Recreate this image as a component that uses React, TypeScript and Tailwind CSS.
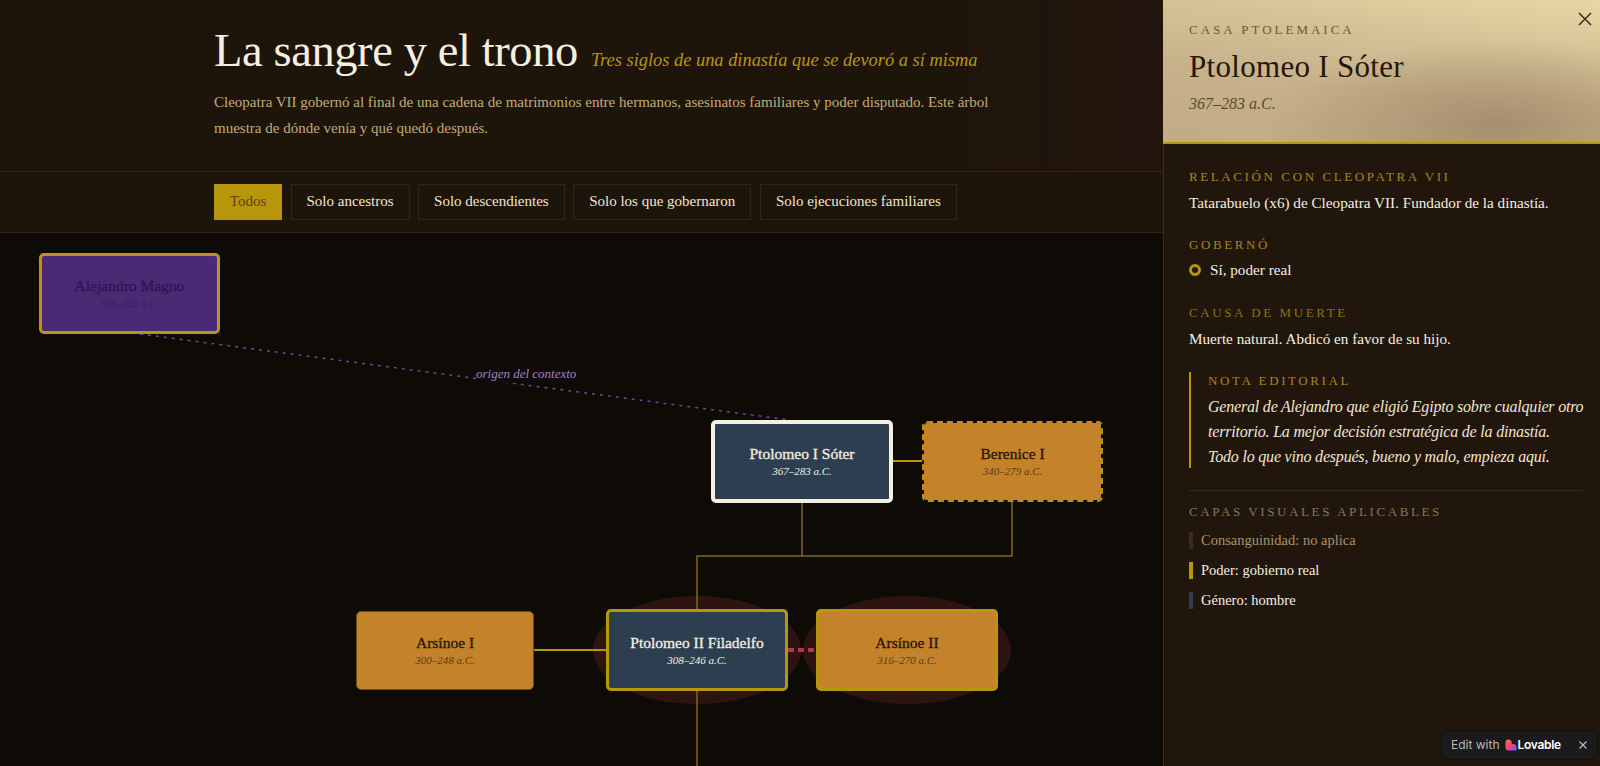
const filters = ['Solo ancestros', 'Solo descendientes', 'Solo los que gobernaron', 'Solo ejecuciones familiares'];

const nodes = [
  {
    name: 'Alejandro Magno',
    dates: '356–323 a.C.',
    box: 'left-[39px] top-[20px] w-[181px] h-[81px] bg-[#4b2a75] border-[3px] border-[#b8941f] text-[#2a1650]',
    sub: 'text-[#35205c]',
  },
  {
    name: 'Ptolomeo I Sóter',
    dates: '367–283 a.C.',
    box: 'left-[711px] top-[187px] w-[182px] h-[83px] bg-[#2c3e50] border-4 border-[#f5efe0] text-[#f5efe0]',
    sub: 'text-[#f5efe0]',
  },
  {
    name: 'Berenice I',
    dates: '340–279 a.C.',
    box: 'left-[922px] top-[188px] w-[181px] h-[81px] bg-[#c4832a] bg-clip-padding border-2 border-dashed border-[#b8960c] text-[#241608]',
    sub: 'text-[#5a3c14]',
  },
  {
    name: 'Arsínoe I',
    dates: '300–248 a.C.',
    box: 'left-[356px] top-[378px] w-[178px] h-[79px] bg-[#c4832a] border border-[#6e4c18] text-[#241608]',
    sub: 'text-[#5a3c14]',
  },
  {
    name: 'Ptolomeo II Filadelfo',
    dates: '308–246 a.C.',
    box: 'left-[606px] top-[376px] w-[182px] h-[82px] bg-[#2c3e50] border-[3px] border-[#b8960c] text-[#f5efe0]',
    sub: 'text-[#f5efe0]',
  },
  {
    name: 'Arsínoe II',
    dates: '316–270 a.C.',
    box: 'left-[816px] top-[376px] w-[182px] h-[82px] bg-[#c4832a] border-[3px] border-[#b8960c] text-[#241608]',
    sub: 'text-[#5a3c14]',
  },
];

const layers = [
  { label: 'Consanguinidad: no aplica', bar: 'bg-[#3a2c18]', text: 'text-[#a89468]' },
  { label: 'Poder: gobierno real', bar: 'bg-[#b8960c]', text: 'text-[#f5efe0]' },
  { label: 'Género: hombre', bar: 'bg-[#2c3e50]', text: 'text-[#f5efe0]' },
];

function Edges() {
  return (
    <svg className="absolute inset-0" width="1163" height="533" fill="none">
      <ellipse cx="697" cy="417" rx="104" ry="54" fill="#2e1410" />
      <ellipse cx="907" cy="417" rx="104" ry="54" fill="#2e1410" />
      <line x1="140" y1="101" x2="790" y2="187" stroke="#6b4a94" strokeWidth="1.5" strokeDasharray="3 5" />
      <line x1="893" y1="228" x2="922" y2="228" stroke="#b8960c" strokeWidth="2" />
      <line x1="534" y1="417" x2="606" y2="417" stroke="#b8960c" strokeWidth="2" />
      <line x1="788" y1="417" x2="816" y2="417" stroke="#b03a4a" strokeWidth="4" strokeDasharray="6 4" />
      <path d="M802 270V323M1012 269V323M696.5 323H1012.5M697 323V376M697 458V533" stroke="#84661f" strokeWidth="1.5" />
    </svg>
  );
}

function TreeNode({ name, dates, box, sub }: (typeof nodes)[number]) {
  return (
    <div className={`absolute flex flex-col items-center justify-center rounded-[5px] ${box}`}>
      <span className="text-[15.5px] leading-[20px] font-normal [-webkit-text-stroke:0.3px_currentColor]">{name}</span>
      <span className={`text-[11px] leading-[15px] italic ${sub}`}>{dates}</span>
    </div>
  );
}

export default function App() {
  return (
    <div className="flex h-[766px] w-[1600px] overflow-hidden bg-[#0e0a06] font-['Liberation_Serif',serif]">
      <main className="flex w-[1163px] shrink-0 flex-col">
        <header className="h-[172px] border-b border-[#33260f] bg-gradient-to-r from-[#1e150a] from-80% to-[#21140c] pl-[214px] pt-[19px]">
          <div className="flex items-baseline">
            <h1 className="text-[46.5px] leading-[64px] font-normal tracking-[-0.4px] text-[#f5efe0]">La sangre y el trono</h1>
            <span className="ml-[13px] text-[18.4px] italic text-[#b8960c]">Tres siglos de una dinastía que se devoró a sí misma</span>
          </div>
          <p className="mt-[6px] w-[790px] text-[15px] leading-[26px] text-[#c4ab76]">
            Cleopatra VII gobernó al final de una cadena de matrimonios entre hermanos, asesinatos familiares y poder disputado. Este árbol muestra de dónde venía y qué quedó después.
          </p>
        </header>

        <nav className="flex h-[61px] items-center gap-[8.5px] border-b border-[#33260f] bg-[#1e150a] pl-[214px]">
          <button className="h-9 w-[68px] border border-[#b8960c] bg-[#b8960c] pb-px text-[15px] text-[#5a4310]">Todos</button>
          {filters.map((label) => (
            <button key={label} className="h-9 border border-[#33260f] px-[15px] pb-px text-[15px] text-[#f0e6cf]">
              {label}
            </button>
          ))}
        </nav>

        <section className="relative flex-1 overflow-hidden bg-[#0e0a06]">
          <Edges />
          {nodes.map((node) => (
            <TreeNode key={node.name} {...node} />
          ))}
          <span className="absolute left-[476px] top-[132px] bg-[#0e0a06] text-[13px] leading-[18px] italic text-[#a582c4]">origen del contexto</span>
        </section>
      </main>

      <aside className="relative flex w-[437px] shrink-0 flex-col border-l border-[#3a2c15] bg-[#21160b]">
        <div className="-ml-px h-[144px] border-b-2 border-[#b8960c] bg-[radial-gradient(ellipse_230px_85px_at_76%_88%,#a68f6e_0%,rgba(166,143,110,0)_100%),linear-gradient(188deg,#e8d7a4_0%,#d6c497_28%,#c6b18a_62%,#c2ab86_100%)] pl-[26px] pt-[21px]">
          <p className="text-[13px] leading-[18px] tracking-[3px] text-[#6d5a35]">CASA PTOLEMAICA</p>
          <h2 className="mt-[8px] text-[31px] leading-[40px] tracking-[0.3px] text-[#241608]">Ptolomeo I Sóter</h2>
          <p className="mt-[6px] text-[16px] leading-[22px] italic text-[#5a4a30]">367–283 a.C.</p>
        </div>
        <button className="absolute right-[6px] top-[10px] text-[#3a2c15]" aria-label="Cerrar">
          <svg width="18" height="18" viewBox="0 0 18 18" fill="none" stroke="currentColor" strokeWidth="1.5">
            <path d="M3 3l12 12M15 3L3 15" />
          </svg>
        </button>

        <div className="pl-[25px] pr-[17px] pt-[24px]">
          <h3 className="text-[13px] leading-[18px] tracking-[2.6px] text-[#a8861a]">RELACIÓN CON CLEOPATRA VII</h3>
          <p className="mt-[5px] text-[15.2px] leading-[24px] text-[#f5efe0]">Tatarabuelo (x6) de Cleopatra VII. Fundador de la dinastía.</p>

          <h3 className="mt-[21px] text-[13px] leading-[18px] tracking-[2.6px] text-[#a8861a]">GOBERNÓ</h3>
          <div className="mt-[4px] flex items-center gap-[9px]">
            <span className="h-3 w-3 rounded-full border-[3px] border-[#b8960c]" />
            <span className="text-[15.2px] leading-[24px] text-[#f5efe0]">Sí, poder real</span>
          </div>

          <h3 className="mt-[22px] text-[13px] leading-[18px] tracking-[2.6px] text-[#8f7216]">CAUSA DE MUERTE</h3>
          <p className="mt-[5px] text-[15.2px] leading-[24px] text-[#f5efe0]">Muerte natural. Abdicó en favor de su hijo.</p>

          <div className="mt-[21px] h-[96px] border-l-2 border-[#b8960c] pl-[17px]">
            <h3 className="text-[13px] leading-[18px] tracking-[2.6px] text-[#a8861a]">NOTA EDITORIAL</h3>
            <p className="mt-[4px] text-[16px] leading-[25px] tracking-[-0.2px] whitespace-nowrap italic text-[#f0e6cf]">
              General de Alejandro que eligió Egipto sobre cualquier otro
              <br />
              territorio. La mejor decisión estratégica de la dinastía.
              <br />
              Todo lo que vino después, bueno y malo, empieza aquí.
            </p>
          </div>

          <div className="mt-[22px] border-t border-[#3a2c15] pt-[12px]">
            <h3 className="text-[13px] leading-[18px] tracking-[2.6px] text-[#8a7850]">CAPAS VISUALES APLICABLES</h3>
            <ul className="mt-[7px] flex flex-col gap-[5px]">
              {layers.map((layer) => (
                <li key={layer.label} className="flex h-[25px] items-center gap-2">
                  <span className={`h-[17px] w-1 ${layer.bar}`} />
                  <span className={`text-[14.5px] ${layer.text}`}>{layer.label}</span>
                </li>
              ))}
            </ul>
          </div>
        </div>

        <div className="absolute left-[278px] top-[731px] flex h-[28px] w-[155px] items-center rounded-[7px] bg-[#1b1b1e] pl-[9px] font-['Inter',sans-serif] text-[12px] shadow-[0_0_0_1px_#14100a]">
          <span className="text-[#b8b8b8]">Edit with</span>
          <svg className="ml-[5px]" width="12" height="12" viewBox="0 0 12 12">
            <defs>
              <linearGradient id="lovable" x1="0" y1="0" x2="1" y2="1">
                <stop offset="0" stopColor="#ff7a2f" />
                <stop offset="0.5" stopColor="#f0427e" />
                <stop offset="1" stopColor="#6a5cf5" />
              </linearGradient>
            </defs>
            <path d="M3.5 0.5C5.4 0.5 6.8 2 6.8 3.7V4.9H8C10 4.9 11.5 6.4 11.5 8.3V11.5H3.5C1.6 11.5 0.5 10 0.5 8.3V3.5C0.5 1.8 1.7 0.5 3.5 0.5Z" fill="url(#lovable)" />
          </svg>
          <span className="ml-[1px] font-semibold tracking-[-0.3px] text-white">Lovable</span>
          <svg className="ml-auto mr-[9px]" width="10" height="10" viewBox="0 0 10 10" fill="none" stroke="#b8b8b8" strokeWidth="1.2">
            <path d="M1.5 1.5l7 7M8.5 1.5l-7 7" />
          </svg>
        </div>
      </aside>
    </div>
  );
}
